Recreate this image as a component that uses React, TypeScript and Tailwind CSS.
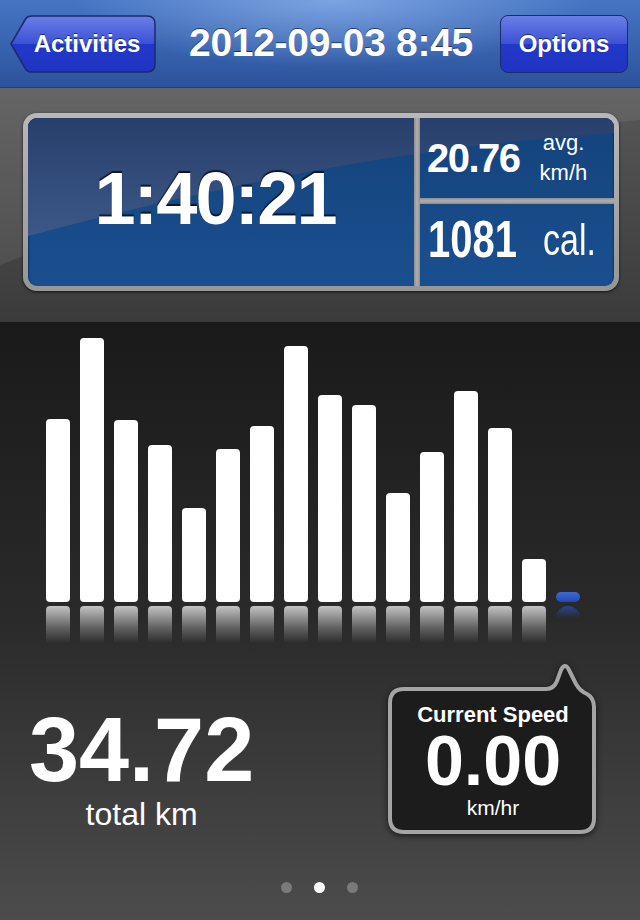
import React from "react";

const bars = [183, 264, 182, 157, 94, 153, 176, 256, 207, 197, 109, 150, 211, 174, 43];

function BackButton() {
  return (
    <div className="relative flex h-[58px] w-[146px] items-center justify-center pl-[8px]">
      <svg className="absolute inset-0" width="146" height="58" viewBox="0 0 146 58">
        <defs>
          <linearGradient id="bb" x1="0" y1="0" x2="0" y2="1">
            <stop offset="0" stopColor="#6b7ee6" />
            <stop offset="0.5" stopColor="#3a51d5" />
            <stop offset="0.5" stopColor="#2238c9" />
            <stop offset="1" stopColor="#1f34c1" />
          </linearGradient>
        </defs>
        <path
          d="M1 29 L15.5 4 Q17.5 1 21.5 1 L137 1 Q145 1 145 9 L145 49 Q145 57 137 57 L21.5 57 Q17.5 57 15.5 54 Z"
          fill="url(#bb)"
          stroke="#1c2a6e"
          strokeWidth="1.5"
        />
      </svg>
      <span className="relative text-[24px] font-bold leading-none [text-shadow:0_-1px_0_rgba(0,0,0,0.5)]">
        Activities
      </span>
    </div>
  );
}

export default function App() {
  return (
    <div className="h-[920px] w-[640px] overflow-hidden bg-[#1b1b1b] font-['Liberation_Sans',Arial,sans-serif] text-white">
      {/* Header */}
      <div className="flex h-[88px] items-center border-b border-[#1f3f7c] bg-[radial-gradient(ellipse_at_52%_0%,rgba(160,195,245,0.6),rgba(160,195,245,0)_55%),linear-gradient(to_bottom,#4675c4,#2b539b)] pl-[10px] pr-[12px]">
        <BackButton />
        <div className="flex flex-1 justify-center pb-[2px] pl-[6px]">
          <span className="text-[39px] font-bold leading-none tracking-[-0.3px] [text-shadow:0_-1px_0_rgba(0,0,0,0.55)]">
            2012-09-03 8:45
          </span>
        </div>
        <div className="flex h-[58px] w-[128px] items-center justify-center rounded-[8px] border-[1.5px] border-[#1c2a6e] bg-[linear-gradient(to_bottom,#6b7ee6_0%,#3a51d5_50%,#2238c9_50%,#1f34c1_100%)]">
          <span className="text-[24px] font-bold leading-none [text-shadow:0_-1px_0_rgba(0,0,0,0.5)]">
            Options
          </span>
        </div>
      </div>

      {/* Stats band */}
      <div className="relative h-[234px] bg-[linear-gradient(to_bottom,#585858,#3b3b3b)] pl-[23px] pr-[21px] pt-[25px]">
        <svg
          className="absolute inset-0 h-full w-full"
          viewBox="0 0 640 234"
          preserveAspectRatio="none"
        >
          <path d="M0 0 H640 V32 Q300 60 0 177 Z" fill="rgba(255,255,255,0.08)" />
        </svg>
        <div className="relative h-[178px] rounded-[14px] bg-[linear-gradient(to_bottom,#b8b8b8,#969696)] p-[5px] shadow-[0_1px_3px_rgba(0,0,0,0.7)]">
          <div className="relative flex h-full overflow-hidden rounded-[9px] bg-[linear-gradient(to_bottom,#14437c,#1a4f8f)] shadow-[inset_0_2px_3px_rgba(0,0,0,0.6)]">
            <svg
              className="absolute inset-0 h-full w-full"
              viewBox="0 0 586 168"
              preserveAspectRatio="none"
            >
              <defs>
                <linearGradient id="gl" x1="0" y1="0" x2="0" y2="1">
                  <stop offset="0" stopColor="#283f6b" />
                  <stop offset="1" stopColor="#3c5888" />
                </linearGradient>
              </defs>
              <path d="M0 0 H586 V15 Q330 30 0 118 Z" fill="url(#gl)" />
            </svg>
            {/* left */}
            <div className="relative flex flex-1 items-center justify-center pb-[6px] pr-[12px]">
              <span className="text-[74px] font-bold leading-none tracking-[-2px] [text-shadow:0_-2px_1px_rgba(0,0,0,0.7)]">
                1:40:21
              </span>
            </div>
            <div className="relative w-[6px] bg-[linear-gradient(to_right,#8e8e8e,#b0b0b0,#8e8e8e)]" />
            {/* right */}
            <div className="relative flex w-[194px] flex-col">
              <div className="flex h-[80px] items-center gap-[20px] pl-[7px]">
                <span className="text-[40px] font-bold leading-none tracking-[-1.5px]">20.76</span>
                <div className="flex flex-col items-center text-[22px] leading-[30px]">
                  <span>avg.</span>
                  <span>km/h</span>
                </div>
              </div>
              <div className="h-[6px] bg-[linear-gradient(to_bottom,#8e8e8e,#b0b0b0,#8e8e8e)]" />
              <div className="flex flex-1 items-center gap-[26px] pb-[12px] pl-[8px]">
                <span className="inline-block scale-y-[1.3] text-[40px] font-bold leading-none">1081</span>
                <span className="inline-block scale-y-[1.3] text-[34px] leading-none">cal.</span>
              </div>
            </div>
          </div>
        </div>
      </div>

      {/* Chart area */}
      <div className="flex h-[598px] flex-col bg-[linear-gradient(to_bottom,#1a1a1a,#2a2a2a_50%,#4c4c4c)]">
        <div className="flex h-[280px] items-end gap-[10px] pl-[46px]">
          {bars.map((h, i) => (
            <div key={i} className="w-[24px] rounded-[4px] bg-white" style={{ height: h }} />
          ))}
          <div className="h-[10px] w-[24px] rounded-full bg-[linear-gradient(to_bottom,#3c6ad6,#2448b0)]" />
        </div>
        <div className="mt-[4px] flex items-start gap-[10px] pl-[46px]">
          {bars.map((_, i) => (
            <div
              key={i}
              className="h-[37px] w-[24px] rounded-t-[4px] bg-[linear-gradient(to_bottom,rgba(255,255,255,0.72),rgba(255,255,255,0.25)_60%,rgba(255,255,255,0))]"
            />
          ))}
          <div className="h-[12px] w-[24px] rounded-t-full bg-[linear-gradient(to_bottom,rgba(40,80,190,0.7),rgba(40,80,190,0))]" />
        </div>

        <div className="flex items-start pl-[29px] pr-[42px]">
          <div className="mt-[62px] flex flex-col items-center">
            <span className="text-[90px] font-bold leading-none">34.72</span>
            <span className="mt-[3px] text-[32px] leading-none">total km</span>
          </div>
          <div className="relative ml-auto mt-[19px] h-[173px] w-[210px]">
            <svg
              className="absolute inset-0 drop-shadow-[0_2px_3px_rgba(0,0,0,0.6)]"
              width="210"
              height="173"
              viewBox="0 0 210 173"
            >
              <path
                d="M16 27 L158 27 Q166 27 169 19 L173 8 Q177 0 181 8 L188 22 Q192 29 199 32 Q206 36 206 45 L206 156 Q206 170 192 170 L16 170 Q2 170 2 156 L2 41 Q2 27 16 27 Z"
                fill="#1c1c1c"
                stroke="#a4a4a4"
                strokeWidth="4"
                strokeLinejoin="round"
              />
            </svg>
            <div className="relative flex flex-col items-center pt-[42px]">
              <span className="text-[22px] font-bold leading-none">Current Speed</span>
              <span className="text-[70px] font-bold leading-none">0.00</span>
              <span className="mt-[1px] text-[21px] leading-none">km/hr</span>
            </div>
          </div>
        </div>

        <div className="mt-[47px] flex justify-center gap-[22px] pr-[1px]">
          <div className="h-[11px] w-[11px] rounded-full bg-[#7a7a7a]" />
          <div className="h-[11px] w-[11px] rounded-full bg-white" />
          <div className="h-[11px] w-[11px] rounded-full bg-[#7a7a7a]" />
        </div>
      </div>
    </div>
  );
}
